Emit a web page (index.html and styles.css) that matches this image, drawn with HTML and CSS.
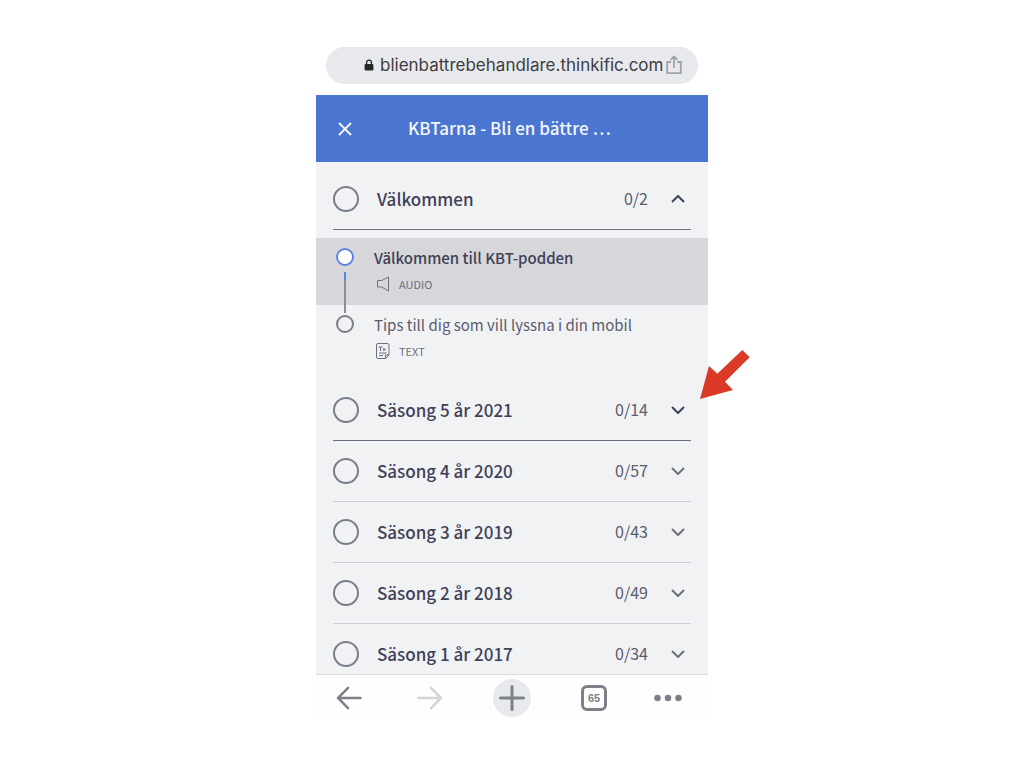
FILE: index.html
```html
<!DOCTYPE html>
<html lang="sv">
<head>
<meta charset="utf-8">
<meta name="viewport" content="width=device-width, initial-scale=1">
<title>KBTarna - Bli en bättre behandlare</title>
<link rel="stylesheet" href="styles.css">
</head>
<body>
<div class="phone">
  <div class="address-bar">
    <svg class="lock" viewBox="0 0 10 12" aria-hidden="true"><path d="M2.6 5.5V3.5a2.4 2.4 0 0 1 4.8 0v2" fill="none" stroke="currentColor" stroke-width="1.3"/><rect x="0.6" y="5" width="8.8" height="6.6" rx="1" fill="currentColor"/></svg>
    <span class="url">blienbattrebehandlare.thinkific.com</span>
    <button class="icon-button share" aria-label="Dela">
      <svg width="16" height="20" viewBox="0 0 16 20" fill="none" stroke="currentColor" stroke-width="1.8"><path d="M5 7H1.2v11.2h13.6V7H11M8 13V1.6M4.6 4.8L8 1.4l3.4 3.4"/></svg>
    </button>
  </div>

  <header class="course-header">
    <button class="icon-button close" aria-label="Stäng">
      <svg width="14" height="14" viewBox="0 0 14 14" stroke="currentColor" stroke-width="1.9"><path d="M1 1l12 12M13 1L1 13"/></svg>
    </button>
    <h1 class="course-title">KBTarna - Bli en bättre …</h1>
  </header>

  <main class="course">
    <section class="chapter">
      <button class="chapter-row open" aria-expanded="true">
        <span class="progress"></span><span class="chapter-title">Välkommen</span><span class="count">0/2</span>
        <svg class="chevron" viewBox="0 0 14 8"><path d="M1 7l6-6 6 6"/></svg>
      </button>
    </section>
    <ul class="lessons">
      <li class="lesson current">
        <span class="dot"></span><span class="connector"></span>
        <a class="lesson-link" href="#kbt-podden">
          <span class="lesson-title">Välkommen till KBT-podden</span>
          <span class="lesson-type">
            <svg width="16" height="18" viewBox="0 0 16 18" fill="none" stroke="currentColor" stroke-width="1"><path d="M2.5 5.5h4.300L13.500 2v14l-6.700-4H2.500z" stroke-linejoin="round"/></svg>
            AUDIO
          </span>
        </a>
      </li>
      <li class="lesson">
        <span class="dot"></span>
        <a class="lesson-link" href="#tips">
          <span class="lesson-title">Tips till dig som vill lyssna i din mobil</span>
          <span class="lesson-type">
            <svg width="16" height="18" viewBox="0 0 16 18" fill="none" stroke="currentColor" stroke-width="1"><path d="M3 1.500h9.500q1.500 0 1.500 1.500v10L10.500 16.500H3Q1.500 16.500 1.500 15V3Q1.500 1.500 3 1.500zM10.500 16.500V13H14M3.500 5h4M5.500 5v4M8 6l2.500 3M10.500 6l-2.500 3M4 11h7.500M4 13.500h4"/></svg>
            TEXT
          </span>
        </a>
      </li>
    </ul>
    <section class="chapter">
      <button class="chapter-row open" aria-expanded="false">
        <span class="progress"></span><span class="chapter-title">Säsong 5 år 2021</span><span class="count">0/14</span>
        <svg class="chevron" viewBox="0 0 14 8"><path d="M1 1l6 6 6-6"/></svg>
      </button>
      <svg class="pointer" viewBox="0 0 52 50" aria-hidden="true"><path d="M1 50L10 17l8.300 7.700L43.300 1l7.400 7.300L26 32.700l8 8.300z"/></svg>
    </section>
    <section class="chapter">
      <button class="chapter-row" aria-expanded="false">
        <span class="progress"></span><span class="chapter-title">Säsong 4 år 2020</span><span class="count">0/57</span>
        <svg class="chevron" viewBox="0 0 14 8"><path d="M1 1l6 6 6-6"/></svg>
      </button>
    </section>
    <section class="chapter">
      <button class="chapter-row" aria-expanded="false">
        <span class="progress"></span><span class="chapter-title">Säsong 3 år 2019</span><span class="count">0/43</span>
        <svg class="chevron" viewBox="0 0 14 8"><path d="M1 1l6 6 6-6"/></svg>
      </button>
    </section>
    <section class="chapter">
      <button class="chapter-row" aria-expanded="false">
        <span class="progress"></span><span class="chapter-title">Säsong 2 år 2018</span><span class="count">0/49</span>
        <svg class="chevron" viewBox="0 0 14 8"><path d="M1 1l6 6 6-6"/></svg>
      </button>
    </section>
    <section class="chapter">
      <button class="chapter-row last" aria-expanded="false">
        <span class="progress"></span><span class="chapter-title">Säsong 1 år 2017</span><span class="count">0/34</span>
        <svg class="chevron" viewBox="0 0 14 8"><path d="M1 1l6 6 6-6"/></svg>
      </button>
    </section>
  </main>

  <nav class="toolbar" aria-label="Webbläsare">
    <button class="tool first" aria-label="Bakåt"><svg width="26" height="24" viewBox="0 0 26 24"><path d="M24.500 12H2M12 1.800L2 12l10 10.200"/></svg></button>
    <button class="tool muted" aria-label="Framåt"><svg width="26" height="24" viewBox="0 0 26 24"><path d="M1.500 12H24M14 1.800L24 12 14 22.200"/></svg></button>
    <button class="tool" aria-label="Ny flik"><span class="plus"><svg width="26" height="26" viewBox="0 0 26 26"><path d="M13 1.500v23M1.500 13h23"/></svg></span></button>
    <button class="tool" aria-label="65 flikar"><span class="tabs">65</span></button>
    <button class="tool more" aria-label="Mer"><svg width="28" height="8" viewBox="0 0 28 8"><g fill="currentColor" stroke="none"><circle cx="3.500" cy="4" r="3.300"/><circle cx="14" cy="4" r="3.300"/><circle cx="24.500" cy="4" r="3.300"/></g></svg></button>
  </nav>
</div>
</body>
</html>
```
FILE: styles.css
```css
* { box-sizing: border-box; }

body {
  margin: 0;
  background: #fff;
  color: #3f4158;
  font-family: "Noto Sans CJK SC", "Open Sans", sans-serif;
}

button {
  border: 0;
  padding: 0;
  background: none;
  color: inherit;
  font: inherit;
}

svg { display: block; flex: none; }

.phone {
  width: 100%;
  max-width: 392px;
  margin: 0 auto;
  padding-top: 47px;
}

.address-bar {
  display: flex;
  align-items: center;
  height: 37px;
  margin: 0 10px 11px;
  padding: 0 16px 2px 38px;
  border-radius: 19px;
  background: #e8e9ed;
}

.lock { width: 10px; height: 12px; margin-right: 6px; color: #26272b; }

.url {
  flex: 1;
  color: #3c3d42;
  font-family: Inter, "Liberation Sans", sans-serif;
  font-size: 17px;
  line-height: 24px;
  white-space: nowrap;
}

.share { color: #9fa3a9; }

.course-header {
  display: flex;
  align-items: center;
  height: 67px;
  padding: 0 22px;
  background: #4a75d1;
  color: #f4f7fd;
}

.course-title {
  margin: 0 0 2px 56px;
  font-size: 17px;
  font-weight: 500;
  line-height: 24px;
}

.course {
  padding-top: 7px;
  background: #f1f2f4;
}

.chapter { position: relative; margin: 0 17px; }

.chapter-row {
  display: flex;
  align-items: center;
  width: 100%;
  padding: 17px 6px 17px 0;
  border-bottom: 1px solid #cdced8;
  text-align: left;
}

.chapter-row.open { border-color: #6d6e80; }
.chapter-row.last { padding-bottom: 7px; border-bottom: 0; }

.progress {
  width: 26px;
  height: 26px;
  margin-right: 18px;
  border: 2px solid #7c7d8b;
  border-radius: 50%;
}

.chapter-title {
  flex: 1;
  font-size: 17px;
  font-weight: 500;
  line-height: 26px;
}

.count {
  margin-right: 23px;
  color: #5b5c6d;
  font-size: 16px;
  line-height: 24px;
  padding-bottom: 2px;
}

.chevron {
  width: 14px;
  height: 8px;
  fill: none;
  stroke: #6d6e80;
  stroke-width: 2;
}

.open .chevron { stroke: #3f4158; }

.pointer {
  position: absolute;
  top: -31px;
  left: 366px;
  width: 52px;
  height: 50px;
  fill: #db3a26;
}

.lessons {
  margin: 8px 0;
  padding: 0;
  list-style: none;
}

.lesson {
  position: relative;
  display: flex;
  height: 67px;
  padding: 10px 20px;
}

.lesson.current { background: #d6d7da; }

.dot {
  width: 18px;
  height: 18px;
  margin-right: 20px;
  border: 2px solid #7c7d8b;
  border-radius: 50%;
}

.current .dot { border-color: #5b84de; background: #fff; }

.connector {
  position: absolute;
  z-index: 1;
  top: 34px;
  left: 28px;
  width: 2px;
  height: 41px;
  background: linear-gradient(#5b84de 8px, #8c8d98 8px);
}

.lesson-link {
  color: inherit;
  text-decoration: none;
}

.lesson-title {
  display: block;
  color: #5b5c6d;
  font-size: 15px;
  line-height: 20px;
}

.current .lesson-title { color: #3f4158; font-weight: 500; }

.lesson-type {
  display: flex;
  align-items: center;
  gap: 8px;
  margin-top: 7px;
  padding-left: 1px;
  color: #6d6e80;
  font-size: 11px;
  line-height: 18px;
}

.toolbar {
  display: grid;
  grid-template-columns: 1fr 82px 82px 82px 1fr;
  padding: 4px 0;
  border-top: 1px solid #d9dade;
  background: #fefefe;
}

.tool {
  display: flex;
  align-items: center;
  justify-content: center;
  height: 38px;
  color: #7d8187;
}

.first { justify-content: flex-start; padding-left: 20px; }
.more { justify-content: flex-end; padding-right: 26px; }

.tool svg {
  fill: none;
  stroke: currentColor;
  stroke-width: 2.5;
  stroke-linecap: round;
}

.plus svg { stroke-width: 3; }

.muted { color: #d3d4d6; }

.plus {
  padding: 6px;
  border-radius: 50%;
  background: #e8e9ed;
}

.tabs {
  width: 26px;
  height: 26px;
  border: 3px solid #7d8187;
  border-radius: 6px;
  font-family: "Liberation Sans", sans-serif;
  font-size: 11px;
  font-weight: 700;
  line-height: 20px;
}
```
